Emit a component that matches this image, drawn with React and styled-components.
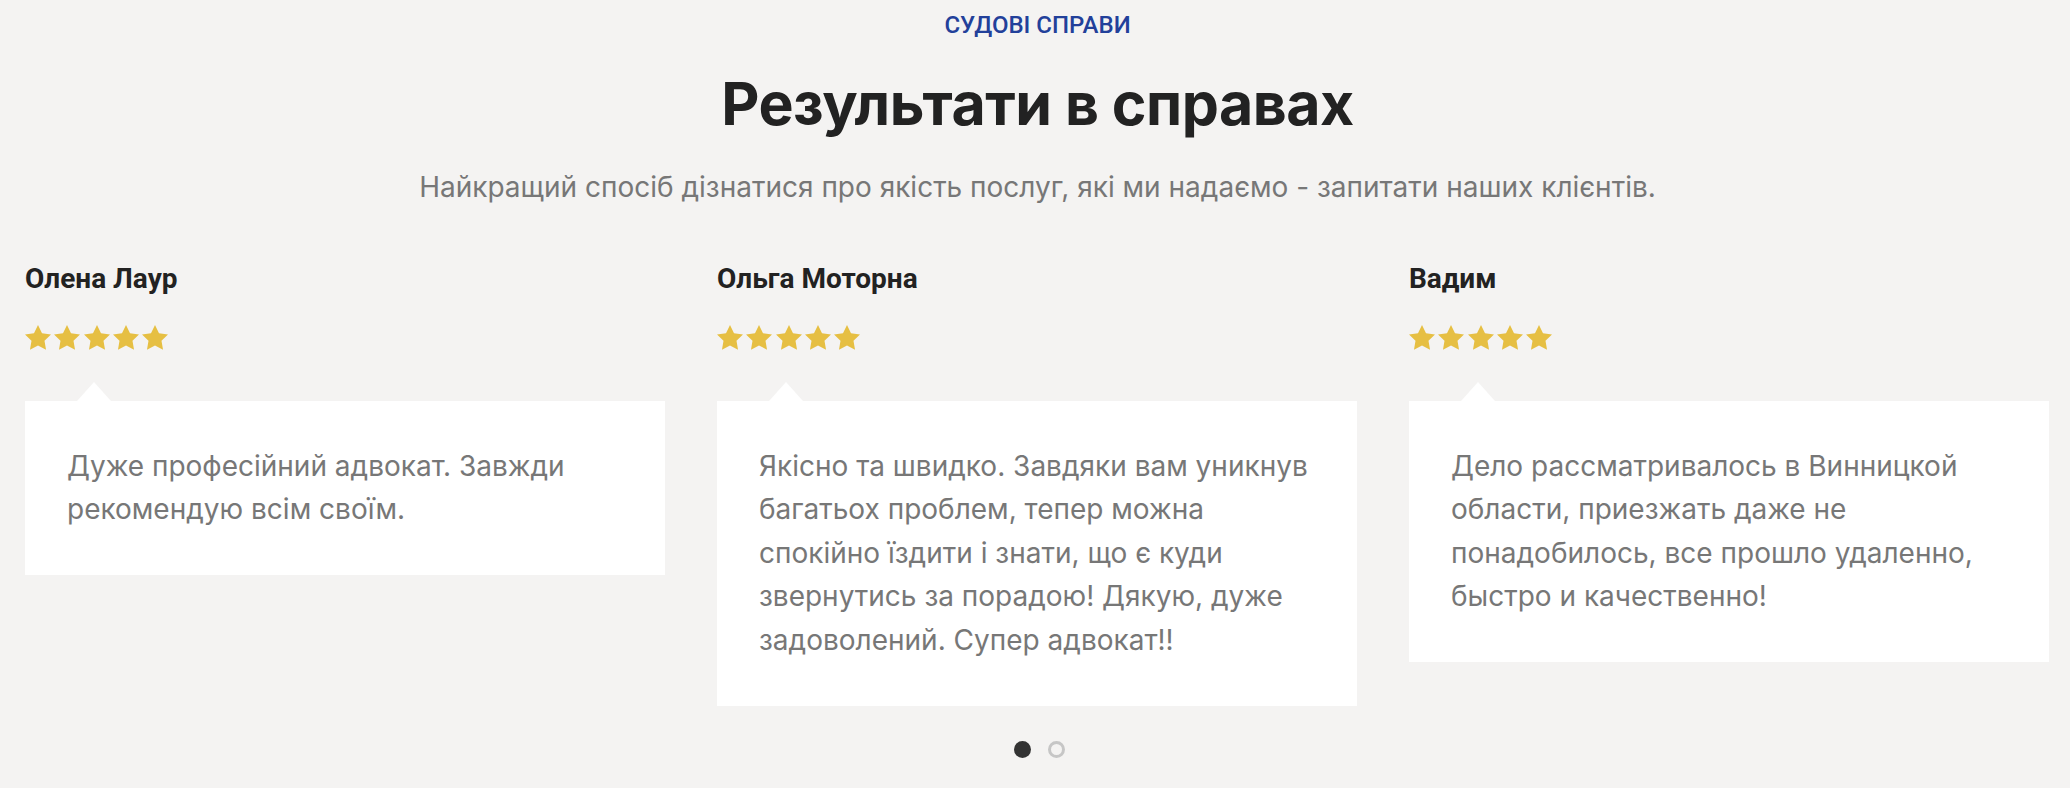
import React from 'react';
import styled, { createGlobalStyle } from 'styled-components';

const GlobalStyle = createGlobalStyle`
	html, body {
		margin: 0;
		padding: 0;
		background: #f4f3f2;
	}
	body {
		font-family: Inter, "Noto Sans", sans-serif;
	}
`;

const Section = styled.section`
	width: 2025px;
	margin-left: 25px;
	padding-top: 11px;
	padding-bottom: 30px;
	display: flex;
	flex-direction: column;
	align-items: center;
`;

const Label = styled.p`
	margin: 0;
	font-family: Roboto, "Liberation Sans", sans-serif;
	font-size: 24px;
	line-height: 28px;
	font-weight: 500;
	color: #22409a;
	text-transform: uppercase;
`;

const Heading = styled.h2`
	margin: 29px 0 0;
	font-family: Inter, "Liberation Sans", sans-serif;
	font-size: 59px;
	line-height: 72px;
	font-weight: 700;
	color: #222;
	letter-spacing: -0.5px;
`;

const Lead = styled.p`
	margin: 29px 0 0;
	font-size: 28px;
	line-height: 36px;
	color: #777;
`;

const Track = styled.div`
	align-self: stretch;
	margin-top: 57px;
	display: grid;
	grid-template-columns: repeat(3, 640px);
	column-gap: 52px;
	align-items: start;
`;

const Review = styled.article`
	display: flex;
	flex-direction: column;
`;

const Name = styled.h3`
	margin: 0;
	font-family: Roboto, "Liberation Sans", sans-serif;
	font-size: 28px;
	line-height: 34px;
	font-weight: 700;
	color: #222;
`;

const Stars = styled.div`
	display: flex;
	gap: 3.3px;
	margin-top: 29px;
	color: #e6bf43;
`;

const Bubble = styled.div`
	position: relative;
	margin-top: 51px;
	background: #fff;
	padding: 44px 42px 43px;
	font-size: 28px;
	line-height: 43.6px;
	color: #777;

	&::before {
		content: '';
		position: absolute;
		top: -19px;
		left: 52px;
		border-left: 17px solid transparent;
		border-right: 17px solid transparent;
		border-bottom: 19px solid #fff;
	}
`;

const Dots = styled.div`
	display: flex;
	gap: 17px;
	margin-top: 35px;
	margin-left: 3px;
`;

const Dot = styled.span`
	width: 17px;
	height: 17px;
	box-sizing: border-box;
	border-radius: 50%;
	background: ${p => (p.$active ? '#333' : 'transparent')};
	border: ${p => (p.$active ? 'none' : '3px solid #c6c6c6')};
`;

const Star = () => (
	<svg width="26" height="24.7" viewBox="2 2 20 19" fill="currentColor">
		<path d="M12 2l3.09 6.26L22 9.27l-5 4.87 1.18 6.88L12 17.77l-6.18 3.25L7 14.14 2 9.27l6.91-1.01L12 2z" />
	</svg>
);

const reviews = [
	{ name: 'Олена Лаур', text: 'Дуже професійний адвокат. Завжди рекомендую всім своїм.' },
	{ name: 'Ольга Моторна', text: 'Якісно та швидко. Завдяки вам уникнув багатьох проблем, тепер можна спокійно їздити і знати, що є куди звернутись за порадою! Дякую, дуже задоволений. Супер адвокат!!' },
	{ name: 'Вадим', text: 'Дело рассматривалось в Винницкой области, приезжать даже не понадобилось, все прошло удаленно, быстро и качественно!' },
];

const App = () => {
	return (
		<>
			<GlobalStyle />
			<Section>
				<Label>Судові справи</Label>
				<Heading>Результати в справах</Heading>
				<Lead>Найкращий спосіб дізнатися про якість послуг, які ми надаємо - запитати наших клієнтів.</Lead>
				<Track>
					{reviews.map(r => (
						<Review key={r.name}>
							<Name>{r.name}</Name>
							<Stars>
								{[0, 1, 2, 3, 4].map(i => <Star key={i} />)}
							</Stars>
							<Bubble>{r.text}</Bubble>
						</Review>
					))}
				</Track>
				<Dots>
					<Dot $active />
					<Dot />
				</Dots>
			</Section>
		</>
	)
}

export default App;
